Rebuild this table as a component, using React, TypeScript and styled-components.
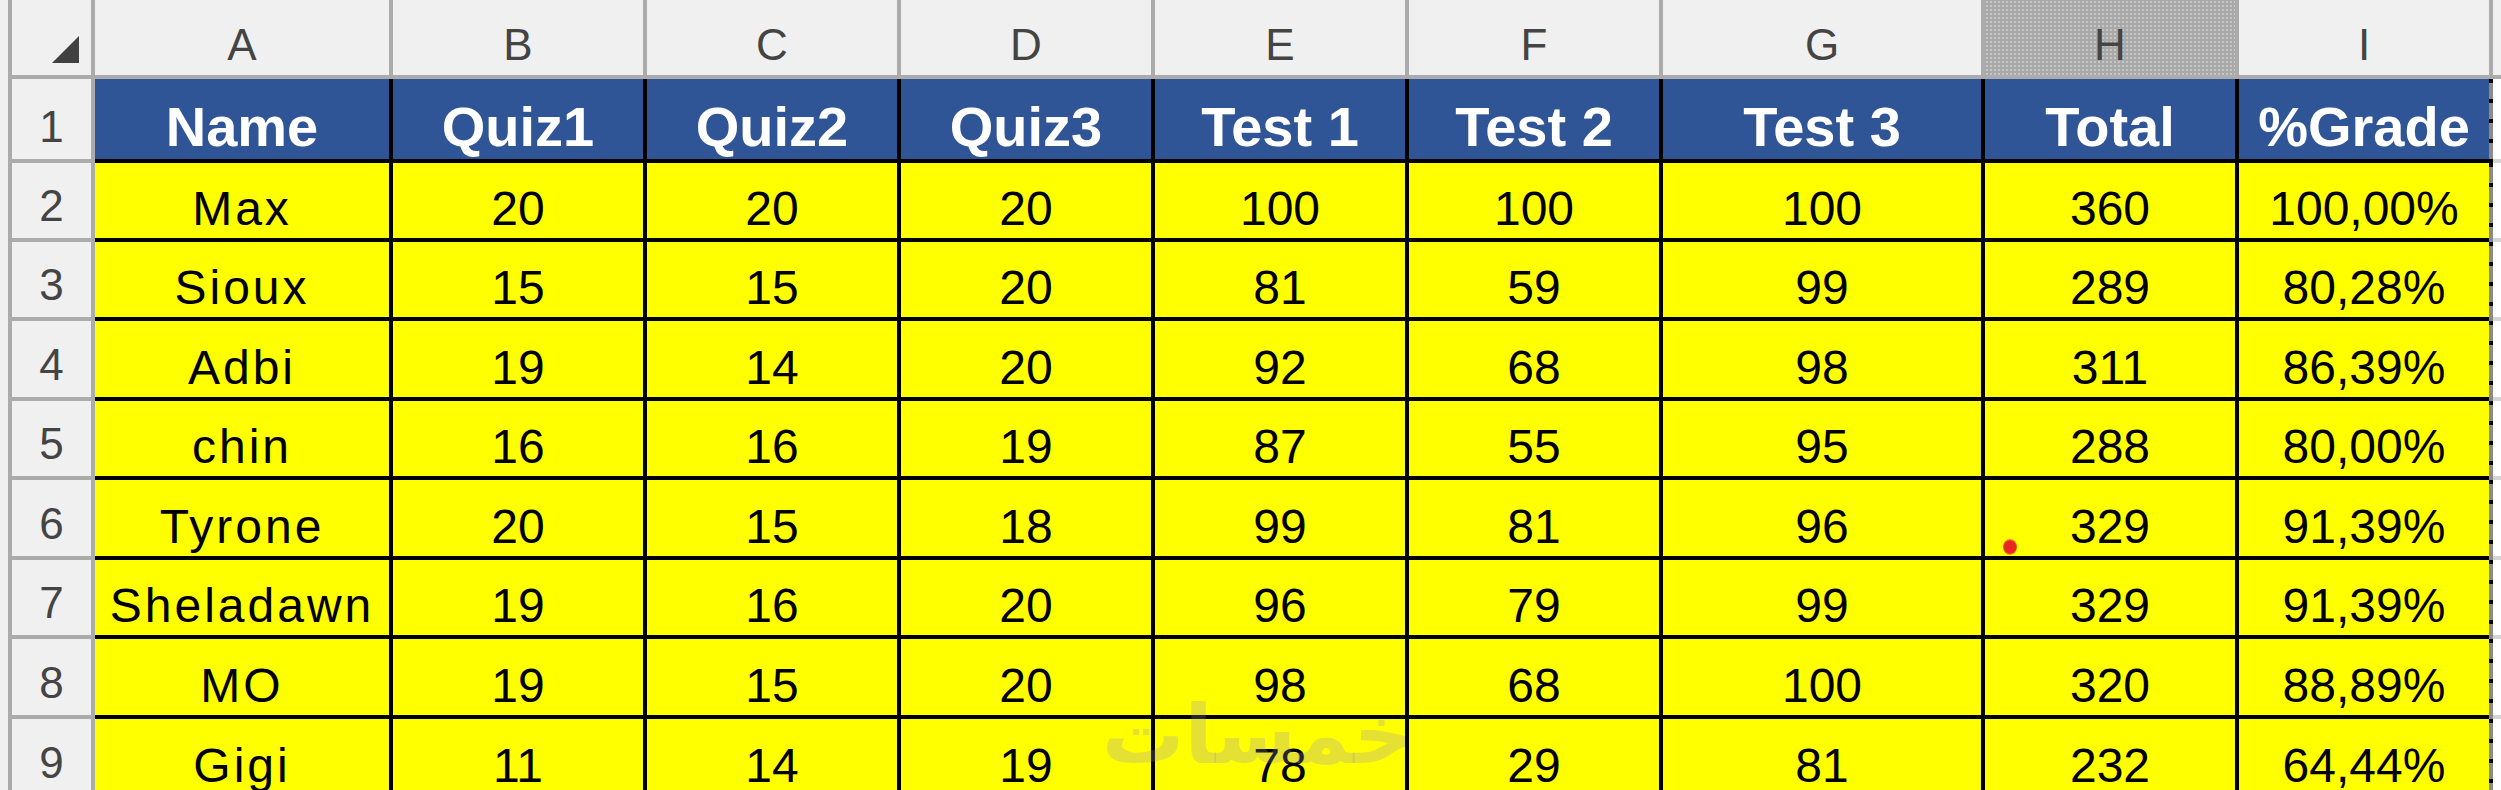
import styled, { createGlobalStyle } from 'styled-components';

const colors = {
  grid: '#ababab',
  header: '#f0f0f0',
  headerText: '#444444',
  selected: '#a9a9a9',
  blue: '#2f5597',
  yellow: '#ffff00',
  line: '#000000',
  faint: '#d4d4d4',
};

const GlobalStyle = createGlobalStyle`
  html, body {
    margin: 0;
    padding: 0;
    background: #ffffff;
  }
  body {
    width: 2501px;
    height: 790px;
    overflow: hidden;
    font-family: "Liberation Sans", Arial, sans-serif;
  }
`;

const Sheet = styled.div`
  position: relative;
  display: flex;
  width: 2501px;
  height: 790px;
  overflow: hidden;
`;

const Gutter = styled.div`
  flex: none;
  width: 12px;
  box-sizing: border-box;
  background: ${colors.header};
  border-right: 4px solid ${colors.grid};
`;

const Grid = styled.div`
  display: flex;
  flex-direction: column;
  flex: 1;
`;

const TopRule = styled.div`
  height: 4px;
  background: ${colors.grid};
`;

const Row = styled.div<{ $h: number }>`
  display: flex;
  flex: none;
  height: ${(p) => p.$h}px;
`;

const HeadCell = styled.div<{ $w: number; $selected?: boolean }>`
  flex: none;
  width: ${(p) => p.$w}px;
  box-sizing: border-box;
  display: flex;
  align-items: flex-end;
  justify-content: center;
  padding-bottom: 8px;
  background-color: ${(p) => (p.$selected ? colors.selected : colors.header)};
  background-image: ${(p) =>
    p.$selected ? 'radial-gradient(rgba(255,255,255,0.35) 0.7px, transparent 1px)' : 'none'};
  background-size: 4px 4px;
  border-right: 4px solid ${colors.grid};
  border-bottom: 4px solid ${colors.grid};
  color: ${colors.headerText};
  font-size: 44px;
  line-height: 1;
`;

const Corner = styled(HeadCell)`
  justify-content: flex-end;
  padding-right: 12px;
  padding-bottom: 12px;
`;

const RowHead = styled.div`
  flex: none;
  width: 83px;
  box-sizing: border-box;
  display: flex;
  align-items: flex-end;
  justify-content: center;
  padding-bottom: 10px;
  background: ${colors.header};
  border-right: 4px solid ${colors.grid};
  border-bottom: 4px solid ${colors.grid};
  color: ${colors.headerText};
  font-size: 44px;
  line-height: 1;
`;

const Cell = styled.div<{ $w: number; $head?: boolean; $name?: boolean; $last?: boolean }>`
  flex: none;
  width: ${(p) => (p.$last ? p.$w - 4 : p.$w)}px;
  box-sizing: border-box;
  display: flex;
  align-items: flex-end;
  justify-content: center;
  padding-bottom: ${(p) => (p.$head ? 4 : 5)}px;
  background: ${(p) => (p.$head ? colors.blue : colors.yellow)};
  border-right: ${(p) => (p.$last ? 'none' : `4px solid ${colors.line}`)};
  border-bottom: 4px solid ${colors.line};
  color: ${(p) => (p.$head ? '#ffffff' : '#000000')};
  font-size: ${(p) => (p.$head ? 56 : 48)}px;
  font-weight: ${(p) => (p.$head ? 700 : 400)};
  letter-spacing: ${(p) => (p.$name && !p.$head ? 3 : 0)}px;
  line-height: 1;
  white-space: nowrap;
`;

const Ants = styled.div`
  flex: none;
  width: 4px;
  background: repeating-linear-gradient(to bottom, #000 0 4px, #8a8a8a 4px 20px);
`;

const Spill = styled.div<{ $head?: boolean }>`
  flex: 1;
  box-sizing: border-box;
  background: ${(p) => (p.$head ? colors.header : '#ffffff')};
  border-bottom: 4px solid ${(p) => (p.$head ? colors.grid : colors.faint)};
`;

const Watermark = styled.div`
  position: absolute;
  left: 1102px;
  top: 694px;
  font-family: "DejaVu Sans", sans-serif;
  font-weight: 700;
  font-size: 82px;
  line-height: 1;
  color: rgba(150, 140, 200, 0.26);
  pointer-events: none;
`;

const Dot = styled.div`
  position: absolute;
  left: 2003px;
  top: 539px;
  width: 14px;
  height: 16px;
  border-radius: 50%;
  background: radial-gradient(circle, #e8281e 55%, rgba(245, 140, 40, 0.8) 75%, transparent 100%);
`;

const columns = [
  { key: 'A', width: 298 },
  { key: 'B', width: 254 },
  { key: 'C', width: 254 },
  { key: 'D', width: 254 },
  { key: 'E', width: 254 },
  { key: 'F', width: 254 },
  { key: 'G', width: 322 },
  { key: 'H', width: 254 },
  { key: 'I', width: 254 },
];

const header = ['Name', 'Quiz1', 'Quiz2', 'Quiz3', 'Test 1', 'Test 2', 'Test 3', 'Total', '%Grade'];

const students = [
  ['Max', '20', '20', '20', '100', '100', '100', '360', '100,00%'],
  ['Sioux', '15', '15', '20', '81', '59', '99', '289', '80,28%'],
  ['Adbi', '19', '14', '20', '92', '68', '98', '311', '86,39%'],
  ['chin', '16', '16', '19', '87', '55', '95', '288', '80,00%'],
  ['Tyrone', '20', '15', '18', '99', '81', '96', '329', '91,39%'],
  ['Sheladawn', '19', '16', '20', '96', '79', '99', '329', '91,39%'],
  ['MO', '19', '15', '20', '98', '68', '100', '320', '88,89%'],
  ['Gigi', '11', '14', '19', '78', '29', '81', '232', '64,44%'],
];

// row heights including the 4px bottom border
const rowHeights = [84, 79, 79, 80, 79, 80, 79, 80, 80];

function SelectAll() {
  return (
    <svg width="27" height="27" viewBox="0 0 27 27">
      <polygon points="0,27 27,27 27,0" fill="#404040" />
    </svg>
  );
}

export default function App() {
  const rows = [header, ...students];
  return (
    <>
      <GlobalStyle />
      <Sheet>
        <Gutter />
        <Grid>
          <TopRule />
          <Row $h={79}>
            <Corner $w={83}>
              <SelectAll />
            </Corner>
            {columns.map((c) => (
              <HeadCell key={c.key} $w={c.width} $selected={c.key === 'H'}>
                {c.key}
              </HeadCell>
            ))}
            <Spill $head />
          </Row>
          {rows.map((values, i) => (
            <Row key={i} $h={rowHeights[i]}>
              <RowHead>{i + 1}</RowHead>
              {values.map((v, j) => (
                <Cell
                  key={j}
                  $w={columns[j].width}
                  $head={i === 0}
                  $name={j === 0}
                  $last={j === values.length - 1}
                >
                  {v}
                </Cell>
              ))}
              <Ants />
              <Spill />
            </Row>
          ))}
        </Grid>
        <Dot />
        <Watermark>خمسات</Watermark>
      </Sheet>
    </>
  );
}
